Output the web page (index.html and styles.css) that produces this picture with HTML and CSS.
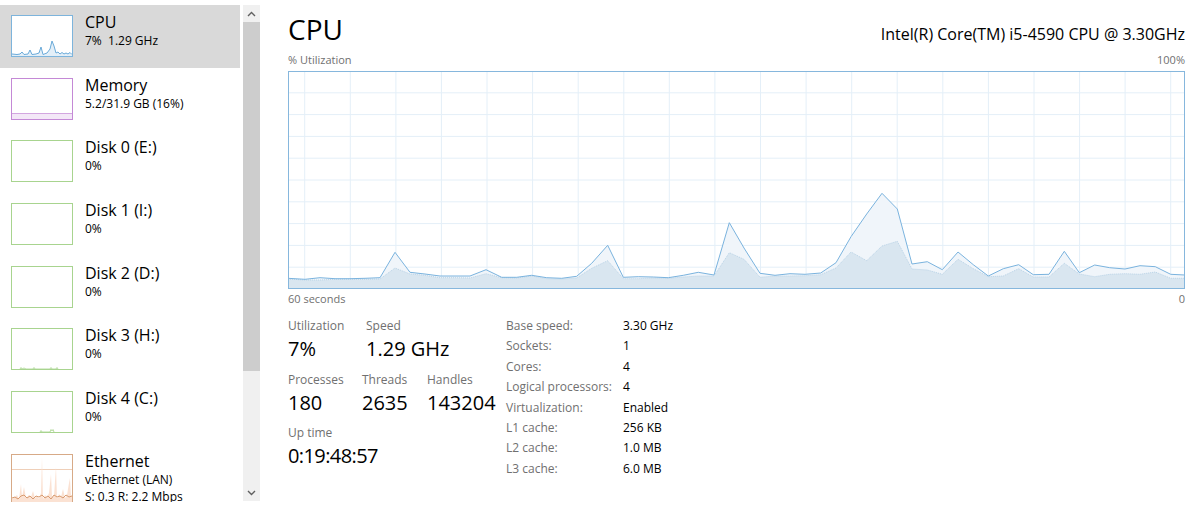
FILE: index.html
```html
<!DOCTYPE html>
<html lang="en">
<head>
    <meta charset="UTF-8">
    <title>Task Manager - Performance</title>
    <link rel="stylesheet" href="styles.css">
</head>
<body>
    <div class="app">
        <aside class="sidebar">
            <div class="perf-list">
                <div class="perf-item selected">
                    <div class="thumb thumb-cpu">
                        <svg width="60" height="40" viewBox="0 0 60 40">
                            <polygon class="cpu-fill" points="0,40 0,38 5,38.5 8,38 10,36 12,38.5 16,38 18,34 20,38.5 24,38 27,37 29,31 31,38.5 35,37 38,33 40,25 42,30 44,37 46,36 48,38 50,36.5 52,38 54,37 56,38 58,36.5 60,38.5 60,40"/>
                            <polyline class="cpu-line" points="0,38 5,38.5 8,38 10,36 12,38.5 16,38 18,34 20,38.5 24,38 27,37 29,31 31,38.5 35,37 38,33 40,25 42,30 44,37 46,36 48,38 50,36.5 52,38 54,37 56,38 58,36.5 60,38.5"/>
                        </svg>
                    </div>
                    <div class="perf-text">
                        <div class="perf-name">CPU</div>
                        <div class="perf-sub">7%&nbsp; 1.29 GHz</div>
                    </div>
                </div>
                <div class="perf-item">
                    <div class="thumb thumb-mem">
                        <svg width="60" height="40" viewBox="0 0 60 40">
                            <rect class="mem-fill" x="0" y="34" width="60" height="6"/>
                            <line class="mem-line" x1="0" y1="34.5" x2="60" y2="34.5"/>
                        </svg>
                    </div>
                    <div class="perf-text">
                        <div class="perf-name">Memory</div>
                        <div class="perf-sub">5.2/31.9 GB (16%)</div>
                    </div>
                </div>
                <div class="perf-item">
                    <div class="thumb thumb-disk"></div>
                    <div class="perf-text">
                        <div class="perf-name">Disk 0 (E:)</div>
                        <div class="perf-sub">0%</div>
                    </div>
                </div>
                <div class="perf-item">
                    <div class="thumb thumb-disk"></div>
                    <div class="perf-text">
                        <div class="perf-name">Disk 1 (I:)</div>
                        <div class="perf-sub">0%</div>
                    </div>
                </div>
                <div class="perf-item">
                    <div class="thumb thumb-disk"></div>
                    <div class="perf-text">
                        <div class="perf-name">Disk 2 (D:)</div>
                        <div class="perf-sub">0%</div>
                    </div>
                </div>
                <div class="perf-item">
                    <div class="thumb thumb-disk">
                        <svg width="60" height="40" viewBox="0 0 60 40">
                            <polyline class="disk-line" points="8,40 9,38.5 10,40 12,39 14,40 21,40 22,38.5 23,40 38,40 39,38.5 40,40 44,40 45,38.5 46,40"/>
                        </svg>
                    </div>
                    <div class="perf-text">
                        <div class="perf-name">Disk 3 (H:)</div>
                        <div class="perf-sub">0%</div>
                    </div>
                </div>
                <div class="perf-item">
                    <div class="thumb thumb-disk">
                        <svg width="60" height="40" viewBox="0 0 60 40">
                            <polyline class="disk-line" points="28,40 29,38.5 30,40 38,40 39,37.5 40,39 41,37.5 42,40"/>
                        </svg>
                    </div>
                    <div class="perf-text">
                        <div class="perf-name">Disk 4 (C:)</div>
                        <div class="perf-sub">0%</div>
                    </div>
                </div>
                <div class="perf-item tall">
                    <div class="thumb thumb-net">
                        <svg width="60" height="54" viewBox="0 0 60 54">
                            <line class="net-grid" x1="0" y1="14.5" x2="60" y2="14.5"/>
                            <polygon class="net-fill" points="0,54 0,44 3,42 5,40 7,44 9,29 10,42 12,32 14,43 17,40 19,42 21,36 23,43 25,41 27,44 29,38 30,2 31,44 33,40 35,42 37,38 39,19 40,42 42,41 44,12 45,44 47,39 49,42 51,34 53,43 55,40 57,28 58,23 59,42 60,40 60,54"/>
                            <polyline class="net-line" points="0,43 3,42 6,44 9,41 12,40 15,43 18,41 21,44 24,41 27,42 30,40 33,43 36,41 39,44 42,40 45,42 48,41 51,43 54,40 57,42 60,41"/>
                        </svg>
                    </div>
                    <div class="perf-text">
                        <div class="perf-name">Ethernet</div>
                        <div class="perf-sub">vEthernet (LAN)</div>
                        <div class="perf-sub">S: 0.3 R: 2.2 Mbps</div>
                    </div>
                </div>
            </div>
            <div class="scrollbar">
                <div class="sb-btn">
                    <svg width="9" height="6" viewBox="0 0 9 6"><polyline points="1,5 4.5,1.5 8,5"/></svg>
                </div>
                <div class="sb-thumb"></div>
                <div class="sb-track"></div>
                <div class="sb-btn">
                    <svg width="9" height="6" viewBox="0 0 9 6"><polyline points="1,1 4.5,4.5 8,1"/></svg>
                </div>
            </div>
        </aside>

        <main class="detail">
            <div class="detail-header">
                <h1>CPU</h1>
                <div class="cpu-model">Intel(R) Core(TM) i5-4590 CPU @ 3.30GHz</div>
            </div>
            <div class="axis-row">
                <span>% Utilization</span>
                <span>100%</span>
            </div>
            <div class="graph">
                <svg width="897" height="218" viewBox="0 0 897 218">
                    <path class="grid" d="M16.7 0V218M62.3 0V218M107.9 0V218M153.4 0V218M199 0V218M244.6 0V218M290.2 0V218M335.8 0V218M381.3 0V218M426.9 0V218M472.5 0V218M518.1 0V218M563.7 0V218M609.2 0V218M654.8 0V218M700.4 0V218M746 0V218M791.6 0V218M837.1 0V218M882.7 0V218M0 21.8H897M0 43.6H897M0 65.4H897M0 87.2H897M0 109H897M0 130.8H897M0 152.6H897M0 174.4H897M0 196.2H897"/>
                    <!-- total utilisation -->
                    <polygon class="total-fill" points="0,207.3 17,208.3 32,206.7 47,207.7 62,207.7 77,207.3 92,206.7 107,181.3 122,201.3 137,203 152,205 167,205 182,205 198,198.7 213.7,206.3 228.7,206.3 243.7,204.3 258.7,206.7 273.7,207.3 288.7,205.3 303.7,192.3 319.7,174.3 335.3,206.3 350.3,205.7 365.3,206 380.3,206.7 395.3,204.3 410.3,201.3 426,204 441.3,151.7 456,177 472,202.3 487,204.3 502,202.7 517,203.3 532.7,202 548,191.7 563,165.7 578.7,143 594,122.3 609.3,138 624,193 639.3,190.7 654.3,198.7 670,181 685.3,193.7 700.3,205 715.3,197.7 730.7,193.7 745.3,203.7 761,203.3 776.3,180.3 791.3,201.7 806.7,194 821.7,196.7 837,198 852,194.7 867.3,195.7 882.7,203.3 897,204 897,218 0,218"/>
                    <!-- kernel time -->
                    <polygon class="kernel-fill" points="0,208 17,209 32,209 47,208.3 62,208.3 77,208.3 92,208 107,197 122,203 137,204.3 152,206.7 167,206.7 182,207 198,202.7 213.7,206.7 228.7,207 243.7,205 258.7,207.7 273.7,208 288.7,207 303.7,197.3 319.7,189.7 335.3,207.7 350.3,207.7 365.3,207 380.3,207.3 395.3,206 410.3,205 426,205 441.3,181.7 456,188.3 472,206.3 487,205 502,205 517,204.7 532.7,203.7 548,197 563,181 578.7,189.7 594,175 609.3,170.3 624,198 639.3,199 654.3,203.3 670,188.3 685.3,197.7 700.3,205.7 715.3,205 730.7,197.7 745.3,206 761,206 776.3,192.3 791.3,203 806.7,205.7 821.7,203.3 837,202.7 852,203.3 867.3,201 882.7,207.3 897,207.3 897,218 0,218"/>
                    <polyline class="kernel-line" points="0,208 17,209 32,209 47,208.3 62,208.3 77,208.3 92,208 107,197 122,203 137,204.3 152,206.7 167,206.7 182,207 198,202.7 213.7,206.7 228.7,207 243.7,205 258.7,207.7 273.7,208 288.7,207 303.7,197.3 319.7,189.7 335.3,207.7 350.3,207.7 365.3,207 380.3,207.3 395.3,206 410.3,205 426,205 441.3,181.7 456,188.3 472,206.3 487,205 502,205 517,204.7 532.7,203.7 548,197 563,181 578.7,189.7 594,175 609.3,170.3 624,198 639.3,199 654.3,203.3 670,188.3 685.3,197.7 700.3,205.7 715.3,205 730.7,197.7 745.3,206 761,206 776.3,192.3 791.3,203 806.7,205.7 821.7,203.3 837,202.7 852,203.3 867.3,201 882.7,207.3 897,207.3"/>
                    <polyline class="total-line" points="0,207.3 17,208.3 32,206.7 47,207.7 62,207.7 77,207.3 92,206.7 107,181.3 122,201.3 137,203 152,205 167,205 182,205 198,198.7 213.7,206.3 228.7,206.3 243.7,204.3 258.7,206.7 273.7,207.3 288.7,205.3 303.7,192.3 319.7,174.3 335.3,206.3 350.3,205.7 365.3,206 380.3,206.7 395.3,204.3 410.3,201.3 426,204 441.3,151.7 456,177 472,202.3 487,204.3 502,202.7 517,203.3 532.7,202 548,191.7 563,165.7 578.7,143 594,122.3 609.3,138 624,193 639.3,190.7 654.3,198.7 670,181 685.3,193.7 700.3,205 715.3,197.7 730.7,193.7 745.3,203.7 761,203.3 776.3,180.3 791.3,201.7 806.7,194 821.7,196.7 837,198 852,194.7 867.3,195.7 882.7,203.3 897,204"/>
                    <rect class="frame" x="0.5" y="0.5" width="896" height="217"/>
                </svg>
            </div>
            <div class="axis-row axis-bottom">
                <span>60 seconds</span>
                <span>0</span>
            </div>

            <div class="stats">
                <div class="dynamic">
                    <div class="stat-row">
                        <div class="stat w-util">
                            <div class="stat-label">Utilization</div>
                            <div class="stat-value">7%</div>
                        </div>
                        <div class="stat">
                            <div class="stat-label">Speed</div>
                            <div class="stat-value">1.29 GHz</div>
                        </div>
                    </div>
                    <div class="stat-row">
                        <div class="stat w-proc">
                            <div class="stat-label">Processes</div>
                            <div class="stat-value">180</div>
                        </div>
                        <div class="stat w-threads">
                            <div class="stat-label">Threads</div>
                            <div class="stat-value">2635</div>
                        </div>
                        <div class="stat">
                            <div class="stat-label">Handles</div>
                            <div class="stat-value">143204</div>
                        </div>
                    </div>
                    <div class="stat-row">
                        <div class="stat">
                            <div class="stat-label">Up time</div>
                            <div class="stat-value uptime">0:19:48:57</div>
                        </div>
                    </div>
                </div>

                <table class="specs">
                    <tr><td>Base speed:</td><td>3.30 GHz</td></tr>
                    <tr><td>Sockets:</td><td>1</td></tr>
                    <tr><td>Cores:</td><td>4</td></tr>
                    <tr><td>Logical processors:</td><td>4</td></tr>
                    <tr><td>Virtualization:</td><td>Enabled</td></tr>
                    <tr><td>L1 cache:</td><td>256 KB</td></tr>
                    <tr><td>L2 cache:</td><td>1.0 MB</td></tr>
                    <tr><td>L3 cache:</td><td>6.0 MB</td></tr>
                </table>
            </div>
        </main>
    </div>
</body>
</html>
```

FILE: styles.css
```css
body, html {
    margin: 0;
    padding: 0;
    font-family: 'Open Sans', sans-serif;
    background-color: #fff;
    color: #000;
}

.app {
    display: flex;
    width: 1200px;
    height: 515px;
    overflow: hidden;
}

/* left list of devices */
.sidebar {
    display: flex;
    width: 260px;
    flex-shrink: 0;
    padding-top: 5px;
}

.perf-list {
    width: 240px;
    height: 497px;
    overflow: hidden;
}

.perf-item {
    display: flex;
    align-items: flex-start;
    height: 62.7px;
    padding-left: 11px;
    box-sizing: border-box;
}

.perf-item.selected {
    background-color: #d9d9d9;
}

.perf-item.tall {
    height: 80px;
}

.thumb {
    width: 62px;
    height: 42px;
    margin-top: 10px;
    flex-shrink: 0;
    box-sizing: border-box;
    border: 1px solid;
    background-color: #fff;
}

.thumb svg {
    display: block;
}

.thumb-cpu { border-color: #7db4dc; }
.thumb-mem { border-color: #c489d6; }
.thumb-disk { border-color: #a8d48f; }
.thumb-net { border-color: #d7aa87; height: 56px; }

.cpu-fill { fill: #e3eff8; }
.cpu-line { fill: none; stroke: #6aaad9; stroke-width: 1; }
.mem-fill { fill: #f3e7f7; }
.mem-line { stroke: #d3a6e0; stroke-width: 1; }
.disk-line { fill: none; stroke: #b7dca2; stroke-width: 1; }
.net-grid { stroke: #efcfb8; stroke-width: 1; }
.net-fill { fill: #fbe2d3; }
.net-line { fill: none; stroke: #d89b70; stroke-width: 1; }

.perf-text {
    margin-left: 12px;
    padding-top: 7px;
    white-space: nowrap;
}

.perf-name {
    font-size: 16px;
    line-height: 20px;
}

.perf-sub {
    font-size: 12px;
    line-height: 17px;
}

.scrollbar {
    display: flex;
    flex-direction: column;
    width: 17px;
    height: 496px;
    margin-left: 3px;
    background-color: #f0f0f0;
}

.sb-btn {
    height: 17px;
    display: flex;
    align-items: center;
    justify-content: center;
}

.sb-btn svg polyline {
    fill: none;
    stroke: #606060;
    stroke-width: 1.4;
}

.sb-thumb {
    height: 349px;
    background-color: #cdcdcd;
}

.sb-track {
    flex: 1;
}

/* right detail pane */
.detail {
    flex: 1;
    min-width: 0;
    padding: 11px 15px 0 28px;
}

.detail-header {
    display: flex;
    justify-content: space-between;
    align-items: baseline;
}

.detail-header h1 {
    margin: 0;
    font-size: 28px;
    font-weight: normal;
    line-height: 36px;
}

.cpu-model {
    font-size: 16px;
    line-height: 22px;
}

.axis-row {
    display: flex;
    justify-content: space-between;
    margin-top: 6px;
    font-size: 11px;
    line-height: 14px;
    color: #707070;
}

.axis-bottom {
    margin-top: 3px;
}

.graph {
    margin-top: 4px;
    height: 218px;
}

.graph svg {
    display: block;
}

.grid { stroke: #e4eff8; stroke-width: 1; fill: none; }
.total-fill { fill: #f0f5fa; }
.kernel-fill { fill: #d9e6f0; }
.kernel-line { fill: none; stroke: #b9d3e7; stroke-width: 1; stroke-dasharray: 1 1; }
.total-line { fill: none; stroke: #7ab3de; stroke-width: 1; }
.frame { fill: none; stroke: #86b7dd; stroke-width: 1; }

.stats {
    display: flex;
    margin-top: 10px;
}

.dynamic {
    width: 218px;
    padding-top: 2px;
}

.stat-row {
    display: flex;
    margin-bottom: 7.7px;
}

.w-util { width: 78px; }
.w-proc { width: 74px; }
.w-threads { width: 65px; }

.stat-label {
    font-size: 12px;
    line-height: 16px;
    color: #707070;
}

.stat-value {
    font-size: 20px;
    line-height: 30px;
    white-space: nowrap;
}

.uptime {
    letter-spacing: -0.6px;
}

.specs {
    border-collapse: collapse;
    font-size: 12px;
    line-height: 20.4px;
}

.specs td {
    padding: 0;
    white-space: nowrap;
}

.specs td:first-child {
    width: 117px;
    color: #707070;
}
```
